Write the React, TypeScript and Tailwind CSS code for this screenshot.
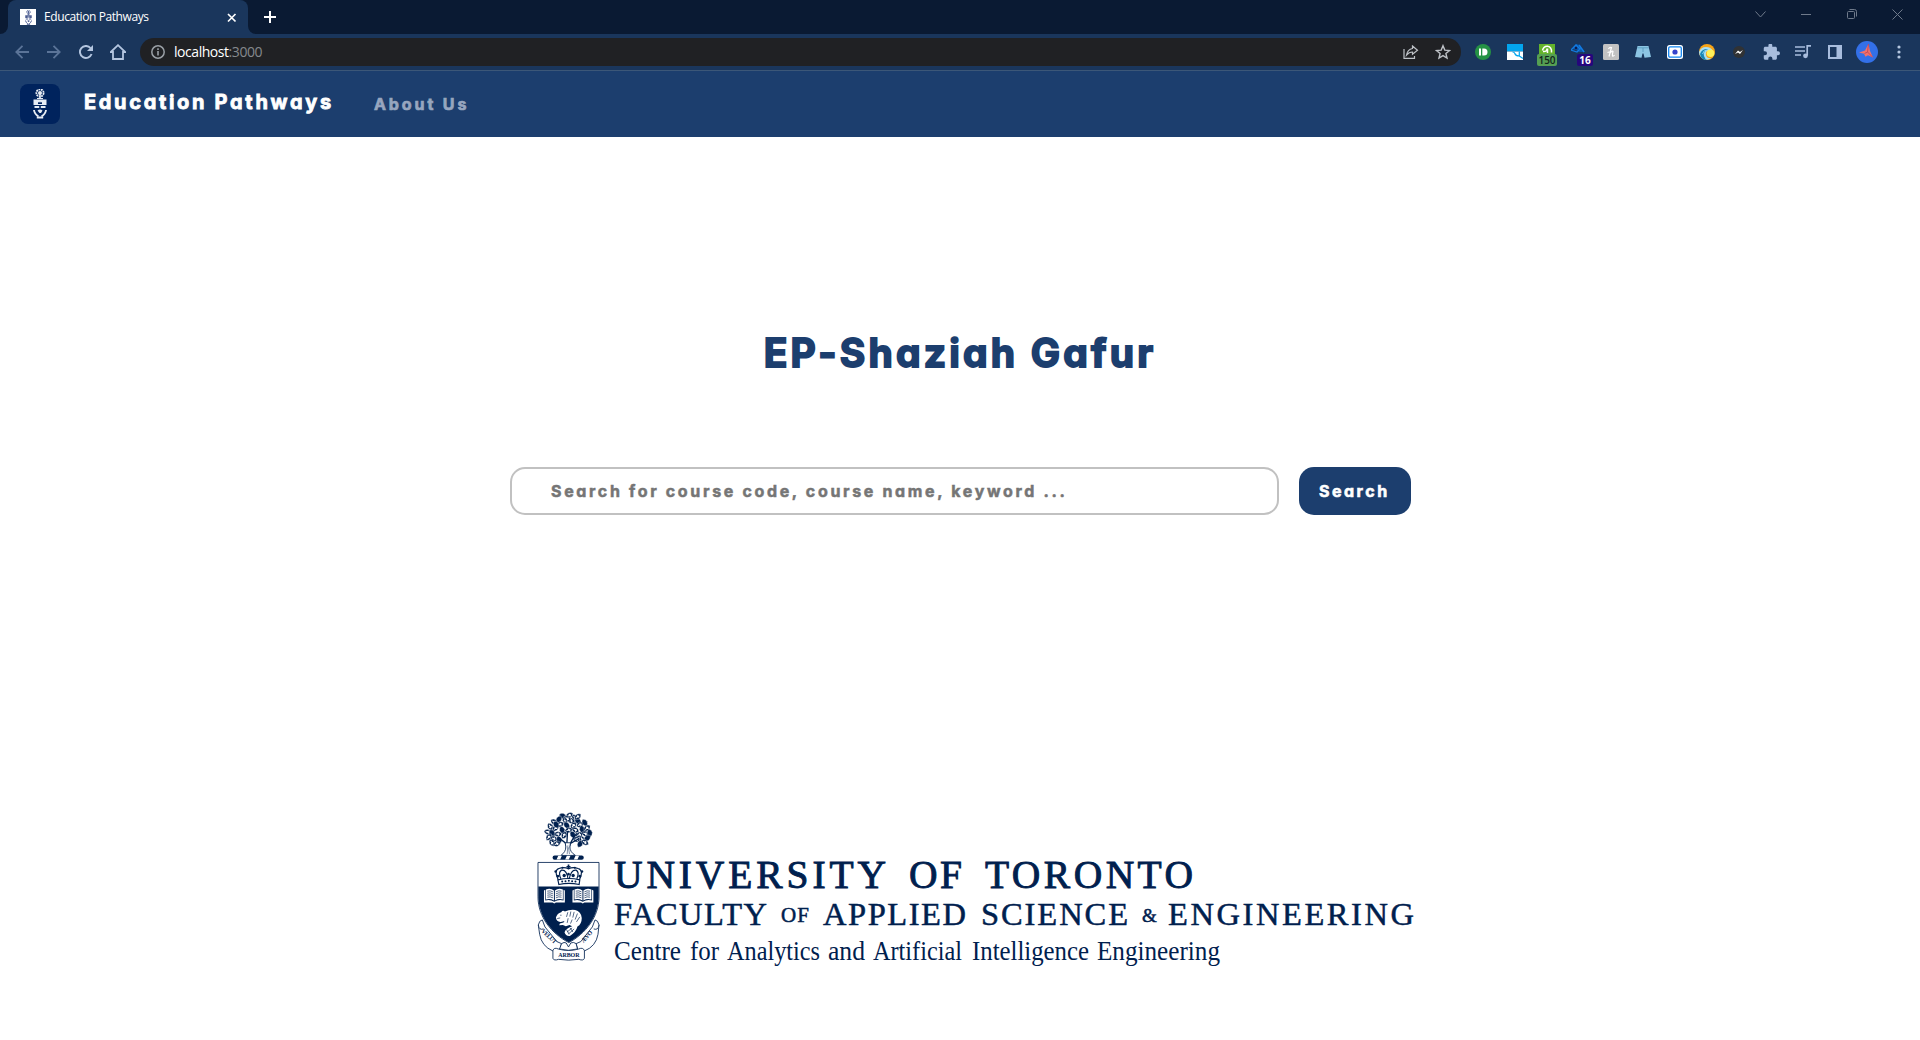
import React from "react";

const leaves: [number, number, number][] = [
  [130, 48, 20], [150, 46, -30], [166, 54, 60], [118, 58, -60], [137, 60, 80], [155, 62, 10], [176, 64, 40],
  [104, 66, 30], [122, 73, -20], [142, 76, 50], [162, 76, -50], [182, 74, -20], [196, 68, 60], [92, 80, 60],
  [108, 84, -40], [128, 90, 70], [148, 90, -10], [168, 90, 30], [188, 88, 80], [203, 84, -40], [85, 96, 10],
  [98, 99, 50], [115, 102, 0], [134, 105, -60], [160, 104, 60], [180, 104, -20], [198, 101, 20], [211, 99, 80],
  [88, 111, -50], [103, 116, 20], [119, 119, 70], [172, 118, 10], [188, 118, 60], [204, 114, -40], [97, 128, 60],
  [112, 131, -20], [182, 131, -60], [197, 127, 30], [144, 56, 30], [110, 74, 60], [175, 50, -40],
];

function Crest({ className, fg, bg }: { className?: string; fg: string; bg: string }) {
  return (
    <svg className={className} viewBox="52 36 190 446" preserveAspectRatio="none" fill="none">
      <g fill={fg} stroke={bg} strokeWidth="1">
        {leaves.map(([x, y, r], i) => (
          <g key={i} transform={`translate(${x} ${y}) rotate(${r})`}>
            <path d="M-12 0 Q-8 -8 0 -8 Q8 -7 12 0 Q7 8 -1 8 Q-9 7 -12 0Z" />
            <path d="M-7 0 H5 M-2 0 L2 -4 M-1 0 L3 4" strokeWidth={i % 3 ? 3.2 : 0} />
          </g>
        ))}
      </g>
      <path d="M138 165 Q144 140 137 128 L116 112 M142 132 L144 96 M150 134 L164 110 L172 100 M152 165 Q146 145 153 130 L178 116" stroke={fg} strokeWidth="4" />
      <path d="M124 166 Q139 156 139 140 L137 128 L153 128 L151 140 Q151 156 168 166Z" fill={bg} stroke={fg} strokeWidth="2.5" />
      <path d="M143 162 L145 136 M150 162 L147 142" stroke={fg} strokeWidth="1.5" />
      <rect x="99" y="166" width="94" height="13" rx="6" fill={fg} />
      <path d="M116 167 L111 178 H122 L127 167Z M142 167 L137 178 H148 L153 167Z M168 167 L163 178 H174 L179 167Z" fill={bg} />
      {/* motto ribbon */}
      <g fill={bg} stroke={fg} strokeWidth="2.5" strokeLinejoin="round">
        <path d="M56 374 Q59 360 68 359 L76 380 L112 424 L126 430 L120 452 L100 452 Q66 438 60 402Z" />
        <path d="M239 374 Q236 360 227 359 L219 380 L184 424 L170 430 L176 452 L195 452 Q230 438 236 402Z" />
        <path d="M56 374 Q58 391 72 386 M239 374 Q237 391 223 386" />
        <path d="M100 451 Q103 440 116 446 Q147 455 178 446 Q191 440 195 451 L195 474 Q192 482 178 477 Q147 482 117 477 Q103 482 100 474Z" />
        <path d="M126 430 Q134 424 140 428 L147 440 L154 428 Q162 424 170 430 L174 446 Q147 454 120 446Z" />
      </g>
      {/* shield */}
      <path d="M55 187 H239 V290 C239 350 198 400 148 427 C96 400 55 350 55 290Z" fill={bg} stroke={fg} strokeWidth="2.5" />
      <path d="M56 259 H238 V290 C237 350 198 400 148 426 C96 400 57 350 56 290Z" fill={fg} />
      {/* crown */}
      <g stroke={fg} strokeWidth="3.5" fill={bg}>
        <path d="M116 239 Q102 210 118 205 Q134 200 147 206 Q160 200 176 205 Q194 210 180 239Z" />
        <path d="M124 236 Q115 216 126 210 Q142 208 146 238 M172 236 Q181 216 170 210 Q154 208 149 238" />
        <path d="M115 239 Q148 231 181 239 L179 253 Q148 246 118 253Z" />
      </g>
      <path d="M147 193 V207 M141 200 H153" stroke={fg} strokeWidth="5" />
      <g fill={fg}>
        <circle cx="108" cy="214" r="3.5" /><circle cx="188" cy="214" r="3.5" /><circle cx="129" cy="203" r="3" /><circle cx="166" cy="203" r="3" />
        <circle cx="134" cy="226" r="5" /><circle cx="161" cy="226" r="5" /><circle cx="147" cy="222" r="4" /><circle cx="115" cy="228" r="4" /><circle cx="181" cy="228" r="4" />
        <circle cx="128" cy="244" r="3" /><circle cx="138" cy="243" r="3" /><circle cx="148" cy="242" r="3" /><circle cx="158" cy="243" r="3" /><circle cx="168" cy="244" r="3" />
      </g>
      {/* books */}
      {[73, 159].map((x) => (
        <g key={x} transform={`translate(${x} 265)`}>
          <path d="M0 6 L4 4 V36 Q18 31 31 40 Q44 31 59 36 V4 L63 6 V42 H36 L31 45 L26 42 H0Z" fill={bg} />
          <path d="M6 3 Q20 -2 30 6 V36 Q19 29 6 33Z M33 6 Q43 -2 57 3 V33 Q44 29 33 36Z" fill={bg} />
          <path d="M10 8 Q19 5 27 10 M10 14 Q19 11 27 16 M10 20 Q19 17 27 22 M10 26 Q19 23 27 28 M36 10 Q44 5 53 8 M36 16 Q44 11 53 14 M36 22 Q44 17 53 20 M36 28 Q44 23 53 26" stroke={fg} strokeWidth="2" />
        </g>
      ))}
      {/* beaver */}
      <path d="M109 352 Q113 339 125 336 Q130 329 136 334 Q150 327 167 329 Q185 333 187 353 Q187 371 174 379 Q170 396 151 407 Q138 408 135 396 Q138 385 158 378 L150 374 L139 378 L130 374 L119 375 L121 370 L132 367 L135 362 L124 365 Q111 366 109 352Z" fill={bg} />
      <path d="M122 345 h4 M113 355 l9 -2 M145 336 l-4 14 M154 334 l-3 15 M164 335 l-4 17 M174 340 l-7 18 M181 350 l-10 15 M146 354 l-3 14 M158 358 l-5 12 M143 395 l15 -12 M147 401 l17 -15 M141 388 l8 14 M152 383 l8 12" stroke={fg} strokeWidth="2" />
      <g fill={fg} fontFamily="Liberation Serif, serif" fontWeight="700" fontSize="18">
        <text x="116" y="470" textLength="64">ARBOR</text>
        <text transform="translate(64 394) rotate(43)" textLength="55">VELUT</text>
        <text transform="translate(192 429) rotate(-48)" textLength="42">ÆVO</text>
      </g>
    </svg>
  );
}

function CrestMark({ className, fg, bg }: { className?: string; fg: string; bg: string }) {
  return (
    <svg className={className} viewBox="0 0 14 30" fill="none" stroke={fg}>
      <circle cx="7" cy="4" r="3.600" strokeWidth="1.800" strokeDasharray="1.800 .7" />
      <circle cx="7" cy="4" r="2" fill={fg} stroke="none" />
      <path d="M7 5v5" strokeWidth="1.500" />
      <path d="M4 9.500h6" strokeWidth="1" />
      <path d="M.5 10.500h13v5.500H.5z" fill={fg} stroke="none" />
      <path d="M5 15v-2l1.200.8.8-1.300.8 1.300L9 13v2z" fill={bg} stroke="none" />
      <path d="M1.500 18h4.700M7.800 18h4.700" strokeWidth="2" />
      <path d="M4.500 21.500q2.500-2 5 0l-1.500 2.500h-1.500z" fill={fg} stroke="none" />
      <path d="M1 21q.5 4 4.500 6.500M13 21q-.5 4-4.500 6.500" strokeWidth="1.900" />
      <path d="M3.800 28.500h6.400" strokeWidth="2" />
    </svg>
  );
}

const lockup: [string, number, number, number, number][] = [
  ["UNIVERSITY", 614, 888, 272, 39.5], ["OF", 909, 888, 53, 39.5], ["TORONTO", 985, 888, 208, 39.5],
  ["FACULTY", 614, 924.5, 153, 32.5], ["OF", 781, 922, 28, 21], ["APPLIED", 823, 924.5, 143, 32.5],
  ["SCIENCE", 981, 924.5, 147, 32.5], ["&", 1142, 922, 14, 19], ["ENGINEERING", 1168, 924.5, 246, 32.5],
  ["Centre", 614, 960, 67, 28], ["for", 690, 960, 29, 28], ["Analytics", 727, 960, 93, 28], ["and", 828, 960, 37, 28],
  ["Artificial", 873, 960, 89, 28], ["Intelligence", 972, 960, 117, 28], ["Engineering", 1097, 960, 123, 28],
];

function Wordmark() {
  return (
    <svg className="h-[136px] w-[806px] font-normal" viewBox="612 840 806 136" fill="#00204e" fontFamily="Liberation Serif, serif">
      {lockup.map(([t, x, y, w, s], i) => (
        <text key={i} x={x} y={y} fontSize={s} textLength={w} lengthAdjust={i > 8 ? "spacingAndGlyphs" : "spacing"}
          stroke="#00204e" strokeWidth={i < 3 ? 0.9 : i < 9 ? 0.5 : 0}>{t}</text>
      ))}
    </svg>
  );
}

const Slot = ({ children }: { children: React.ReactNode }) => (
  <div className="relative flex h-8 w-8 items-center justify-center">{children}</div>
);

function Extensions() {
  return (
    <div className="ml-[6px] flex items-center">
      <Slot>
        <svg width="16" height="16"><circle cx="8" cy="8" r="8" fill="#259245" /><path d="M4 4.500h2v7H4zM7.300 4.500h1.700a3.500 3.500 0 0 1 0 7H7.300z" fill="#fff" /></svg>
      </Slot>
      <Slot>
        <svg width="16" height="16"><path fill="#03a5ee" d="M0 0h16v7.500H0z" /><path d="M0 7.500h16V16H0z" fill="#fff" /><path d="M5.500 8q2 0 2.300 1.500q.8 2.500 4.500 2.500V7.500M12.300 12l3.700 2.500" fill="none" stroke="#03a5ee" strokeWidth="1.200" /></svg>
      </Slot>
      <Slot>
        <svg width="16" height="16"><path fill="#64b32c" d="M0 0h16v16H0z" /><path d="M3.500 6.500Q4.500 2 8.500 2.200Q13 3 12.500 8.500M4 7.500Q8 8 8 4.500M8.500 4.500V9" fill="none" stroke="#fff" strokeWidth="1.500" /></svg>
        <span className="absolute left-[6px] top-[18px] flex h-3 w-5 items-center justify-center rounded-[2px] bg-[#559f53] font-['Open_Sans',sans-serif] text-[10px] font-semibold leading-none text-[#10251b]">150</span>
      </Slot>
      <Slot>
        <svg width="16" height="16" className="-translate-y-0.5"><path d="M1 7l4-5 4 1 5 7H8L5 8z" fill="#0b55a8" /><path d="M0 8l5-5 4 4-3 3zM8 3l5 7" fill="none" stroke="#137be0" strokeWidth="1.300" /><circle cx="5" cy="6" r="1.200" fill="#0b1a50" /></svg>
        <span className="absolute left-[14px] top-[18px] flex h-3 w-4 items-center justify-center rounded-[2px] bg-[#25067d] font-['Open_Sans',sans-serif] text-[10px] font-bold leading-none text-white">16</span>
      </Slot>
      <Slot>
        <svg width="16" height="16"><rect width="16" height="16" rx="1.500" fill="#c2c2c2" /><path d="M6 12.500L8.500 3.500Q6.500 3 5.500 5M6.800 9.500Q9.500 6 10 7.500Q9 11 9.500 12Q10.500 12.500 11.500 11M4.500 8.500L8 7.500" fill="none" stroke="#fff" strokeWidth="1.200" /></svg>
      </Slot>
      <Slot>
        <svg width="16" height="16"><path d="M2.500 2h11L16 13l-6.500 .8L8.500 9.500h-1L6.500 13.800 0 13z" fill="#8cc5e3" /><path d="M2.300 3.800h11.400M8 4v4" stroke="#4a91b5" fill="none" strokeWidth=".7" /></svg>
      </Slot>
      <Slot>
        <svg width="16" height="14"><rect width="16" height="14" rx="2.500" fill="#fff" /><rect x="1.700" y="1.900" width="12.600" height="10.200" rx="1.300" fill="#fff" stroke="#1185f2" strokeWidth="1.300" /><circle cx="8" cy="7" r="2.600" fill="#3542cb" /></svg>
      </Slot>
      <Slot>
        <svg width="16" height="16"><circle cx="8" cy="8" r="8" fill="#f7a417" /><path d="M0 8Q2 3 7 3Q12 3 14 7Q6 5 7 11Q8 15 13 14Q6 18 2 13Q0 11 0 8Z" fill="#a9dff4" /><path d="M1 10Q3 4.500 9 5Q3.500 8 5 12Q6 15 8 16Q2 16 1 10Z" fill="#1686b8" /><path d="M3.500 10Q4.500 6 8 6" fill="none" stroke="#8bd5ef" /><circle cx="11.500" cy="9.300" r="3.800" fill="#fff15a" /></svg>
      </Slot>
      <Slot>
        <svg width="12" height="12"><circle cx="6" cy="6" r="6" fill="#303234" /><path d="M2 8l3-3.500 2 1.500 3-2L7 8 5 6.500z" fill="#fff" /></svg>
      </Slot>
      <Slot>
        <svg width="17" height="17" viewBox="1 1.500 22 22" fill="#a8bddd"><path d="M20.500 11H19V7c0-1.100-.9-2-2-2h-4V3.500a2.500 2.500 0 0 0-5 0V5H4c-1.100 0-2 .9-2 2v3.800h1.500a2.700 2.700 0 0 1 0 5.400H2V20c0 1.100.9 2 2 2h3.800v-1.500a2.700 2.700 0 0 1 5.400 0V22H17c1.100 0 2-.9 2-2v-4h1.500a2.500 2.500 0 0 0 0-5z" /></svg>
      </Slot>
      <Slot>
        <svg width="16" height="14"><path d="M0 2h10M0 6h10M0 10h6" stroke="#a8bddd" strokeWidth="1.600" /><path d="M12 .8h4M12.200 0v10.500" stroke="#a8bddd" strokeWidth="1.700" /><circle cx="10.500" cy="10.800" r="2.400" fill="#a8bddd" /></svg>
      </Slot>
      <Slot>
        <svg width="14" height="14"><path d="M0 0h14v14H0zM2 2v10h6.500V2z" fill="#a8bddd" fillRule="evenodd" /></svg>
      </Slot>
      <Slot>
        <svg width="22" height="22" className="shrink-0"><circle cx="11" cy="11" r="11" fill="#3370e8" /><path d="M12.500 3L9 9.500 3 11.500l5 1.200 1.500 3 2.500-1.500 5 2.300L14 10z" fill="#f0716a" /><path d="M12.500 3L11.500 11l-3 1.500M11.500 11l5 5" fill="none" stroke="#c34657" strokeWidth=".9" /></svg>
      </Slot>
      <Slot>
        <svg width="4" height="14" fill="#b4c6e0"><circle cx="2" cy="2" r="1.600" /><circle cx="2" cy="7" r="1.600" /><circle cx="2" cy="12" r="1.600" /></svg>
      </Slot>
    </div>
  );
}

function TabStrip() {
  return (
    <div className="flex h-[34px] bg-[#0a1a33]">
      <div className="flex w-2 items-end bg-[#1a365c]"><div className="h-full w-full rounded-br-lg bg-[#0a1a33]" /></div>
      <div className="flex w-60 items-center rounded-t-lg bg-[#1a365c] pl-3">
        <div className="flex h-4 w-4 items-center justify-center bg-white">
          <CrestMark className="h-[15px] w-[9px]" fg="#4c5d92" bg="#fff" />
        </div>
        <span className="ml-2 w-[183px] whitespace-nowrap font-['Open_Sans',sans-serif] text-xs tracking-[-0.41px] text-white">Education Pathways</span>
        <svg width="10" height="10" className="mt-px"><path d="M1 1l7.500 7.500M8.500 1L1 8.500" stroke="#fff" strokeWidth="1.700" /></svg>
      </div>
      <div className="w-2 bg-[#1a365c]"><div className="h-full w-full rounded-bl-lg bg-[#0a1a33]" /></div>
      <svg width="12" height="12" className="ml-2 mt-[11px]"><path d="M6 0v12M0 6h12" stroke="#fff" strokeWidth="2" /></svg>
      <div className="ml-auto flex h-7 items-center text-[#6f7a8b]">
        <div className="flex w-[46px] justify-center"><svg width="11" height="7"><path d="M.5.5l5 5.500 5-5.500" fill="none" stroke="currentColor" /></svg></div>
        <div className="flex w-[46px] justify-center"><svg width="10" height="1"><path d="M0 0h10v1H0z" fill="currentColor" /></svg></div>
        <div className="flex w-[46px] justify-center"><svg width="10" height="10" fill="none" stroke="currentColor"><rect x=".5" y="2.500" width="7" height="7" rx="1" /><path d="M2.500.5h5q2 0 2 2v5" /></svg></div>
        <div className="flex w-[45px] justify-center"><svg width="11" height="11"><path d="M.5.500l10 10M10.500.500l-10 10" stroke="currentColor" /></svg></div>
      </div>
    </div>
  );
}

function Toolbar() {
  return (
    <div className="flex h-[37px] items-center border-b border-[#3c5778] bg-[#1a365c]">
      <div className="ml-[6px] flex">
        <Slot><svg width="14" height="14" fill="none" stroke="#5b7498" strokeWidth="1.800"><path d="M14 7H1.500M7.500.800L1.300 7l6.200 6.200" /></svg></Slot>
        <Slot><svg width="14" height="14" fill="none" stroke="#5b7498" strokeWidth="1.800"><path d="M0 7h12.500M6.500.800L12.700 7l-6.200 6.200" /></svg></Slot>
        <Slot><svg width="14" height="14"><path d="M12.600 9A6 6 0 1 1 11.500 3" fill="none" stroke="#b4c6e0" strokeWidth="1.900" /><path d="M14 0v6H8z" fill="#b4c6e0" /></svg></Slot>
        <Slot><svg width="16" height="16"><path d="M.8 8L8 1.200 15.200 8H13v7H3V8z" fill="none" stroke="#b4c6e0" strokeWidth="1.800" /></svg></Slot>
      </div>
      <div className="ml-[6px] flex h-7 w-[1321px] items-center rounded-full bg-[#202124] pl-[11px]">
        <svg width="14" height="14"><circle cx="7" cy="7" r="6.200" fill="none" stroke="#9aa0a6" strokeWidth="1.500" /><path d="M6.200 6h1.600v4.500H6.200zM6.200 3.300h1.600v1.600H6.200z" fill="#9aa0a6" /></svg>
        <span className="ml-[9px] font-['Open_Sans',sans-serif] text-sm tracking-[-0.45px] text-white">localhost<span className="text-[#85898d]">:3000</span></span>
        <div className="ml-auto mr-[2px] flex">
          <Slot><svg width="16" height="14" fill="none" stroke="#bdc1c6" strokeWidth="1.200"><path d="M1 4v9.400h10.500V11" /><path d="M9.500 1l5 4.300-5 4V7Q6 7 3.500 10Q4.500 4.500 9.500 3.500z" /></svg></Slot>
          <Slot><svg width="16" height="16" viewBox="0 0 16 16"><path d="M8 1.700l1.800 4.400 4.700.4-3.600 3 1.100 4.600L8 11.600l-4 2.500 1.100-4.600-3.600-3 4.700-.4z" fill="none" stroke="#bdc1c6" strokeWidth="1.400" /></svg></Slot>
        </div>
      </div>
      <Extensions />
    </div>
  );
}

export default function App() {
  return (
    <div className="flex h-[1040px] w-[1920px] flex-col overflow-hidden bg-white">
      <TabStrip />
      <Toolbar />
      <nav className="flex h-[66px] items-center bg-[#1c3e6e] pl-5 font-['Inter',sans-serif] font-bold [font-feature-settings:'cv11']">
        <div className="flex h-10 w-10 items-center justify-center rounded-lg bg-[#00235d]">
          <CrestMark className="h-[30px] w-[14px]" fg="#e8edf4" bg="#00235d" />
        </div>
        <a className="ml-6 w-[266px] whitespace-nowrap pb-1 text-xl leading-none tracking-[2.680px] text-white [-webkit-text-stroke:0.8px_white]">Education Pathways</a>
        <a className="ml-6 whitespace-nowrap text-base leading-none tracking-[2.900px] text-[#97a6bf] [-webkit-text-stroke:0.7px_#97a6bf]">About Us</a>
      </nav>
      <main className="flex flex-col items-center font-['Inter',sans-serif] font-bold [font-feature-settings:'cv11']">
        <h1 className="mt-[192px] whitespace-nowrap text-[39px] leading-[48px] tracking-[3.200px] text-[#1c3e6e] [-webkit-text-stroke:1.800px_#1c3e6e]">EP-Shaziah Gafur</h1>
        <form className="mt-[90px] flex w-[902px] gap-5 pl-px">
          <div className="flex h-12 w-[769px] items-center rounded-[15px] border-2 border-[#c1c1c1] pl-[39px] text-base leading-none tracking-[2.660px] text-[#757575] [-webkit-text-stroke:0.5px_#757575]"><span className="whitespace-nowrap">Search for course code, course name, keyword ...</span></div>
          <button type="button" className="h-12 w-28 rounded-[15px] bg-[#1c3e6e] pl-5 text-left text-base leading-none tracking-[2.500px] text-white [-webkit-text-stroke:0.600px_white]">Search</button>
        </form>
        <div className="mt-[297px] flex w-[880px] gap-3">
          <Crest className="ml-[17px] h-[149px] w-[63px] shrink-0" fg="#00204e" bg="#fff" />
          <div className="shrink-0 pt-7"><Wordmark /></div>
        </div>
      </main>
    </div>
  );
}
